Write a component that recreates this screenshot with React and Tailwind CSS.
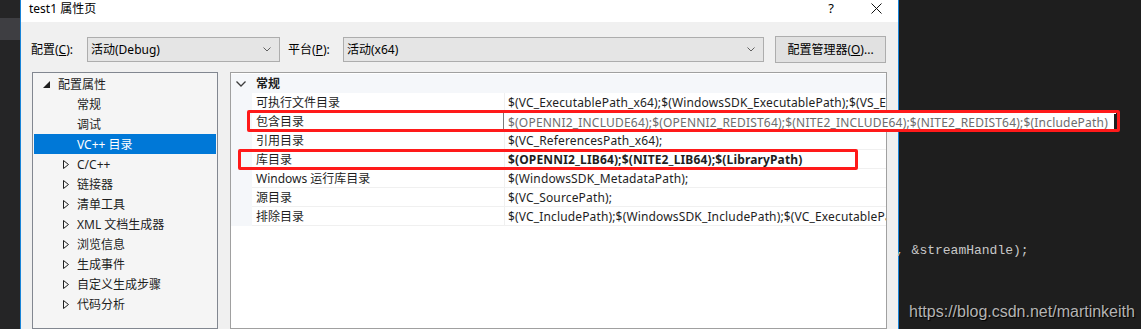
import React from "react";

const UI = "font-['Noto_Sans','Noto_Sans_CJK_SC',sans-serif]";

function ChildArrow() {
  return (
    <svg width="6" height="9" viewBox="0 0 6 9" className="shrink-0">
      <path d="M0.5 0.5 L5.5 4.5 L0.5 8.5 Z" fill="none" stroke="#1e1e1e" strokeWidth="1" />
    </svg>
  );
}

function RootArrow() {
  return (
    <svg width="7" height="7" viewBox="0 0 7 7" className="shrink-0">
      <path d="M7 0 L7 7 L0 7 Z" fill="#1e1e1e" />
    </svg>
  );
}

const treeItems = [
  { label: "常规", arrow: false },
  { label: "调试", arrow: false },
  { label: "VC++ 目录", arrow: false, selected: true },
  { label: "C/C++", arrow: true },
  { label: "链接器", arrow: true },
  { label: "清单工具", arrow: true },
  { label: "XML 文档生成器", arrow: true },
  { label: "浏览信息", arrow: true },
  { label: "生成事件", arrow: true },
  { label: "自定义生成步骤", arrow: true },
  { label: "代码分析", arrow: true },
];

const gridRows = [
  { name: "可执行文件目录", value: "$(VC_ExecutablePath_x64);$(WindowsSDK_ExecutablePath);$(VS_ExecutablePath);$(MSBuild_ExecutablePath);$(PATH);" },
  { name: "包含目录", value: "", editing: true },
  { name: "引用目录", value: "$(VC_ReferencesPath_x64);" },
  { name: "库目录", value: "$(OPENNI2_LIB64);$(NITE2_LIB64);$(LibraryPath)", bold: true },
  { name: "Windows 运行库目录", value: "$(WindowsSDK_MetadataPath);" },
  { name: "源目录", value: "$(VC_SourcePath);" },
  { name: "排除目录", value: "$(VC_IncludePath);$(WindowsSDK_IncludePath);$(VC_ExecutablePath_x64);$(VC_LibraryPath_x64);" },
];

function Combo({ text, width }) {
  return (
    <div className={`h-[25px] ${width} bg-[#e5e5e5] border border-[#adadad] flex items-center pl-[3px] pr-[8px]`}>
      <span className="flex-1 text-[12px] text-[#000]">{text}</span>
      <svg width="8" height="5" viewBox="0 0 8 5">
        <path d="M0.5 0.5 L4 4 L7.5 0.5" fill="none" stroke="#606060" strokeWidth="1" />
      </svg>
    </div>
  );
}

export default function App() {
  return (
    <div className={`relative w-[1141px] h-[329px] overflow-hidden flex bg-[#1e1e1e] ${UI}`}>
      {/* left editor strip */}
      <div className="w-[20px] bg-[#252526] flex flex-col">
        <div className="h-[18px]" />
        <div className="h-[22px] bg-[#3e3e42]" />
      </div>

      {/* dialog */}
      <div className="w-[879px] border-l border-r border-[#1883d7] flex flex-col bg-[#f0f0f0]">
        <div className="h-[22px] bg-white flex items-center pl-[8px] text-[12px] text-black">
          <span className="flex-1 -mt-[5px]">test1 属性页</span>
          <span className="text-[13px] mr-[37px] -mt-[5px]">?</span>
          <svg width="11" height="11" viewBox="0 0 11 11" className="mr-[16px] -mt-[5px]">
            <path d="M0.5 0.5 L10.5 10.5 M10.5 0.5 L0.5 10.5" stroke="#111" strokeWidth="1" />
          </svg>
        </div>

        <div className="flex items-center h-[27px] mt-[14px] pl-[10px] text-[12px] text-black">
          <span className="w-[56px]">
            配置(<span className="underline">C</span>):
          </span>
          <Combo text="活动(Debug)" width="w-[193px]" />
          <span className="ml-[8px] w-[55px]">
            平台(<span className="underline">P</span>):
          </span>
          <Combo text="活动(x64)" width="w-[421px]" />
          <div className="ml-[11px] w-[111px] h-[27px] bg-[#e1e1e1] border border-[#adadad] flex items-center justify-center">
            配置管理器(<span className="underline">O</span>)...
          </div>
        </div>

        <div className="flex mt-[9px] ml-[11px] gap-[12px] flex-1">
          {/* tree */}
          <div className="w-[186px] border border-[#828790] bg-[#f5f5f5] pt-[1px] text-[12px] text-[#1e1e1e]">
            <div className="h-[20px] flex items-center pl-[10px] pt-[1px]">
              <RootArrow />
              <span className="ml-[8px]">配置属性</span>
            </div>
            {treeItems.map((t) => (
              <div
                key={t.label}
                className={`h-[20px] flex items-center pt-[1px] ${t.selected ? "bg-[#0078d7] text-white mx-[1px] pl-[29px]" : "pl-[30px]"}`}
              >
                <span className="w-[14px] flex">{t.arrow ? <ChildArrow /> : null}</span>
                <span>{t.label}</span>
              </div>
            ))}
          </div>

          {/* property grid */}
          <div className="w-[657px] border border-[#a0a0a0] bg-white pt-[1px] overflow-hidden text-[12px] text-[#1e1e1e]">
            <div className="h-[19px] flex items-center bg-[#f5f7fa] pt-[1px]">
              <svg width="10" height="6" viewBox="0 0 10 6" className="ml-[5px]">
                <path d="M0.5 0.5 L5 5 L9.5 0.5" fill="none" stroke="#3c3c3c" strokeWidth="1.3" />
              </svg>
              <span className="ml-[10px] font-bold">常规</span>
            </div>
            {gridRows.map((r) => (
              <div key={r.name} className="h-[19px] flex">
                <div className="w-[21px] bg-[#f5f7fa]" />
                <div className={`w-[252px] border-b border-[#f0f0f0] flex items-center pl-[4px] pt-[2px] ${r.editing ? "bg-white" : ""}`}>
                  {r.name}
                </div>
                <div className="flex-1 min-w-0 border-l border-b border-[#f0f0f0] flex items-center pl-[3px] pt-[2px] whitespace-nowrap overflow-hidden tracking-[0.15px]">
                  <span className={r.bold ? "font-bold" : ""}>{r.value}</span>
                </div>
              </div>
            ))}
          </div>
        </div>
      </div>

      {/* right editor area */}
      <div className="flex-1 relative">
        <div className="absolute left-[-3px] top-[241px] font-['Liberation_Mono',monospace] text-[13px] text-[#c8c8c8] whitespace-pre">
          , &amp;streamHandle);
        </div>
        <div className="absolute left-[10px] top-[300px] font-['Liberation_Sans',Arial,sans-serif] text-[16px] text-[#b4b4b4] whitespace-nowrap [text-shadow:1px_1px_1px_#000]">
          https://blog.csdn.net/martinkeith
        </div>
      </div>

      {/* in-place edit box of 包含目录 (extends over the dialog edge) */}
      <div className="absolute left-[503px] top-[112px] w-[613px] h-[19px] bg-white border-l border-[#7a7a7a] flex items-center pl-[4px] pt-[2px] text-[12px] text-[#6d6d6d] whitespace-nowrap tracking-[0.2px]">
        <span className="flex-1">$(OPENNI2_INCLUDE64);$(OPENNI2_REDIST64);$(NITE2_INCLUDE64);$(NITE2_REDIST64);$(IncludePath)</span>
        <span className="w-[2px] h-full bg-[#1e1e1e]" />
      </div>

      {/* annotation boxes */}
      <div className="absolute left-[247px] top-[110px] w-[873px] h-[22px] border-[3px] border-[#ff1a1a] rounded-[2px]" />
      <div className="absolute left-[238px] top-[149px] w-[620px] h-[21px] border-[3px] border-[#ff1a1a] rounded-[2px]" />
    </div>
  );
}
